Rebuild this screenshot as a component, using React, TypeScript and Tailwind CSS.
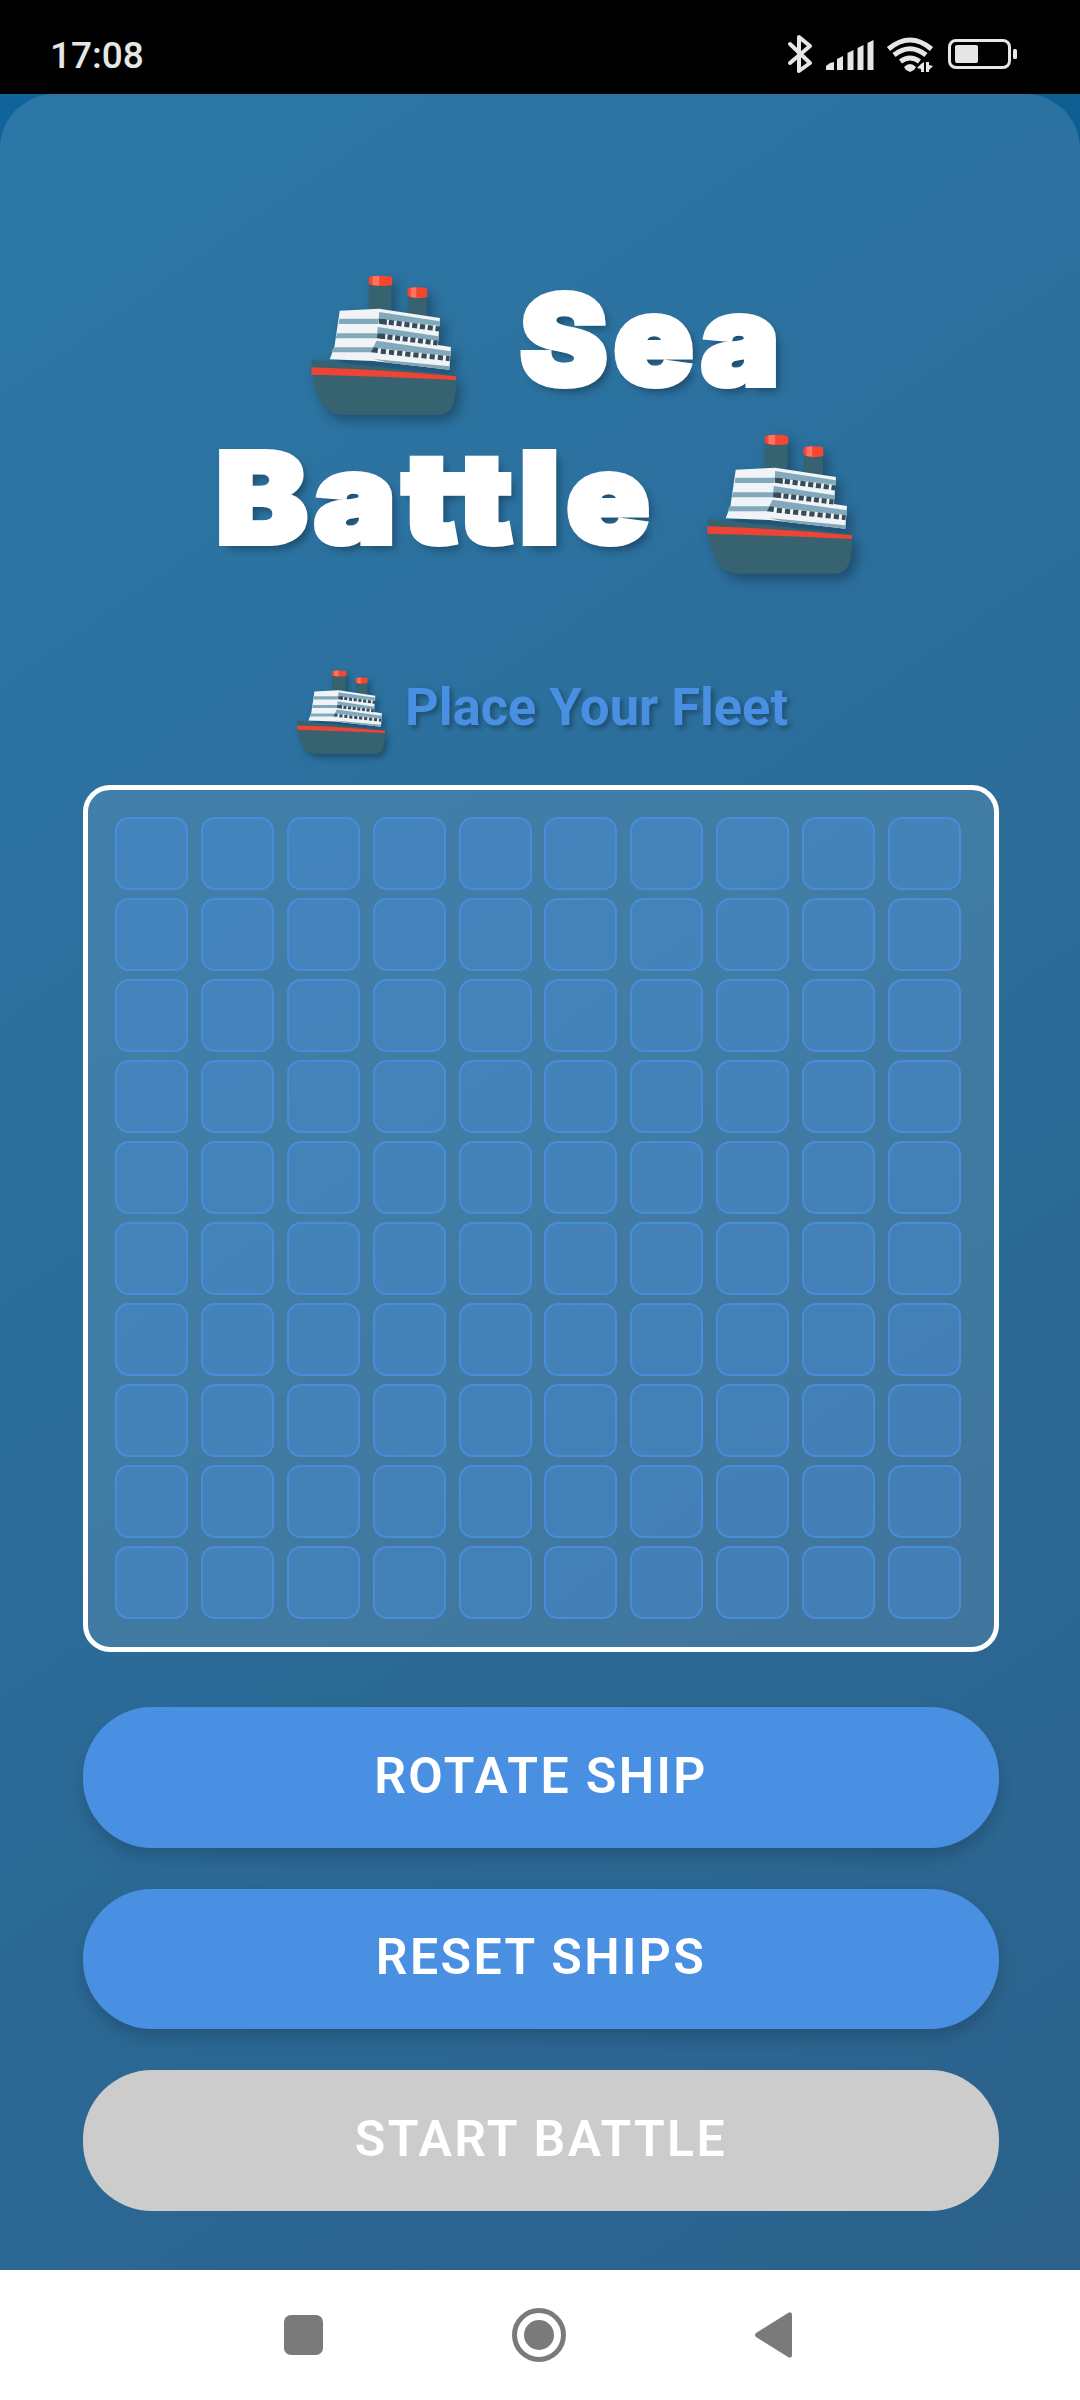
import React from 'react';

const ROWS = 10;
const COLS = 10;

// Cruise ship used in the title and the subtitle
const Ship: React.FC<{ className?: string }> = ({ className = '' }) => (
    <svg viewBox="64 46 434 420" preserveAspectRatio="none" className={className}>
        {/* Funnels */}
        <path d="M237 70h67v85h-67z" fill="#37626f" />
        <path d="M354 104h57v65h-57z" fill="#37626f" />
        <path d="M237 54q0-6 34-6t36 6v22q-14 3-35 3t-35-5z" fill="#f8452f" />
        <path d="M248 50l20-2v30l-20-2z" fill="#ff7461" />
        <path d="M353 89q0-6 30-6t29 6v22q-8 4-29 4t-30-7z" fill="#f8452f" />
        <path d="M362 85l17-2v31l-17-2z" fill="#ff7461" />
        {/* Hull */}
        <path d="M65 300L498 347V375Q497 412 489 435Q477 465 447 465H150Q112 463 91 420Q65 370 65 300z" fill="#37626f" />
        <path d="M65 323Q290 330 498 350V361Q290 351 65 345z" fill="#ee4435" />
        {/* Cabins */}
        <path d="M150 153L268 147L450 175L444 256L483 262L478 330L250 304L120 299L134 262z" fill="#f1f4f7" />
        <path d="M250 298L478 320V330L300 310z" fill="#82a5b7" />
        <path d="M149 177H267L265 193H147zM142 221H264L262 236H138zM132 263H251L243 278H125z" fill="#82a9bb" />
        <path d="M268 157L450 185V199L267 178zM264 202L445 230V243L262 221zM260 243L483 275V290L250 264z" fill="#82a9bb" />
        <path d="M275 185L449 208" stroke="#374c59" strokeWidth="15" strokeDasharray="15.5 8" strokeDashoffset="-22" fill="none" />
        <path d="M270 229L443 250" stroke="#374c59" strokeWidth="15" strokeDasharray="15 8" strokeDashoffset="-23" fill="none" />
        <path d="M266 274L479 297" stroke="#374c59" strokeWidth="15" strokeDasharray="15.5 9" strokeDashoffset="-7" fill="none" />
        <path d="M267 177L291 180V195L267 192zM263 221L286 223V238L261 236zM251 263L265 265L263 280L243 278z" fill="#374c59" />
    </svg>
);

const StatusIcons = () => (
    <svg width="240" height="50" viewBox="785 30 240 50" fill="none" className="text-[#e6e6e6]">
        <path d="M790 44L810 63L799 71V37L810 46L790 63" stroke="currentColor" strokeWidth="4" strokeLinejoin="round" strokeLinecap="round" />
        <g fill="currentColor">
            <path d="M826 70v-4l4-3 4-1v8zM837 70V59l6-3v14zM847.500 70V53l6-3v20zM857.500 70V48l6-3v25zM867.500 70V43l6-3v30z" />
            <path d="M904 67q6-6 12 0l-2 3-4 2-4-2z" />
            <path d="M924 62v10h-3v-3l-4-1 4-4zM926 72V62l3-0v3l4 1-4 4v2z" />
        </g>
        <path d="M888.500 49Q910 31 931.500 49M894 55Q910 42.500 926 55M900.500 61.500Q910 54.500 919.500 61.500" stroke="currentColor" strokeWidth="5" />
        <rect x="949.500" y="40.500" width="60" height="27" rx="6.500" stroke="currentColor" strokeWidth="3" />
        <rect x="955" y="45" width="23" height="18" rx="2" fill="currentColor" />
        <rect x="1013" y="49" width="4" height="10" rx="1.500" fill="currentColor" />
    </svg>
);

const GameButton: React.FC<{ label: string; disabled?: boolean }> = ({ label, disabled }) => (
    <button
        disabled={disabled}
        className={`h-[140.500px] w-full rounded-[69px] pb-[3px] text-[50px] leading-none font-semibold tracking-[2.400px] text-white ${disabled ? 'bg-[#ccc]' : 'bg-[#4a90e2] shadow-[0_9px_15px_rgba(0,0,0,0.16)]'}`}
    >
        {label}
    </button>
);

const App: React.FC = () => (
    <div className="flex h-[2400px] w-[1080px] flex-col overflow-hidden bg-white font-['Roboto','Liberation_Sans',sans-serif]">
        <header className="flex h-[94px] shrink-0 items-center justify-between bg-black pr-[55px] pl-[50px]">
            <span className="pt-4 text-[37px] leading-none font-medium text-[#e6e6e6]">17:08</span>
            <div className="pt-4"><StatusIcons /></div>
        </header>

        <div className="h-[2176px] shrink-0 bg-linear-[145deg,#0f659b,#0e4c7c]">
            <main className="flex h-full flex-col rounded-t-[55px] bg-white/12 px-[81px] pt-[174px] pl-[83px]">
                <h1 className="flex h-[317px] flex-col font-['Inter','Roboto',sans-serif] text-[125px] leading-[158px] font-black tracking-[6px] text-white">
                    <span className="flex h-[158px] pl-[228px]">
                        <Ship className="mt-[7px] h-[140px] w-[145px] shrink-0 drop-shadow-[5px_6px_6px_rgba(0,0,0,0.3)]" />
                        <span className="-mt-[7px] ml-[64px] origin-left scale-x-105 [-webkit-text-stroke:6px_white] [text-shadow:5px_6px_8px_rgba(0,0,0,0.35)]">Sea</span>
                    </span>
                    <span className="flex h-[158px] pl-[133px]">
                        <span className="-mt-[7px] w-[491px] origin-left scale-x-[1.095] [-webkit-text-stroke:6px_white] [text-shadow:5px_6px_8px_rgba(0,0,0,0.35)]">Battle</span>
                        <Ship className="mt-[8px] h-[140px] w-[145px] shrink-0 drop-shadow-[5px_6px_6px_rgba(0,0,0,0.3)]" />
                    </span>
                </h1>

                <h2 className="mt-[85px] flex h-[115px] pl-[214px] text-[52.400px] leading-[74px] font-bold text-[#4a90e2]">
                    <Ship className="h-[84px] w-[88px] shrink-0 drop-shadow-[3px_4px_3px_rgba(0,0,0,0.3)]" />
                    <span className="ml-5 [text-shadow:3px_3px_5px_rgba(0,0,0,0.3)]">Place Your Fleet</span>
                </h2>

                <div className="flex h-[867px] shrink-0 flex-col gap-2 rounded-[27px] border-5 border-white bg-white/10 p-[27px]">
                    {Array.from({ length: ROWS }, (_, row) => (
                        <div key={row} className="flex gap-[12.9px]">
                            {Array.from({ length: COLS }, (_, col) => (
                                <div key={col} className="size-[73px] shrink-0 rounded-[14px] border-2 border-[#4a90e2]/80 bg-[#4a90e2]/35" />
                            ))}
                        </div>
                    ))}
                </div>

                <div className="mt-[55px] flex flex-col gap-[41px]">
                    <GameButton label="ROTATE SHIP" />
                    <GameButton label="RESET SHIPS" />
                    <GameButton label="START BATTLE" disabled />
                </div>
            </main>
        </div>

        {/* Android navigation bar */}
        <nav className="flex h-[130px] items-center bg-white pl-[284px] text-[#7a7a7a]">
            <div className="h-10 w-[39px] rounded-[7px] bg-current" />
            <div className="ml-[189px] flex size-[54px] items-center justify-center rounded-full border-5 border-current">
                <div className="size-[30px] rounded-full bg-current" />
            </div>
            <svg className="ml-[189px]" width="37" height="46" viewBox="0 0 37 46" fill="currentColor">
                <path d="M1 21L33 1q4-2 4 2v40q0 4-4 2L1 25q-2-2 0-4z" />
            </svg>
        </nav>
    </div>
);

export default App;
